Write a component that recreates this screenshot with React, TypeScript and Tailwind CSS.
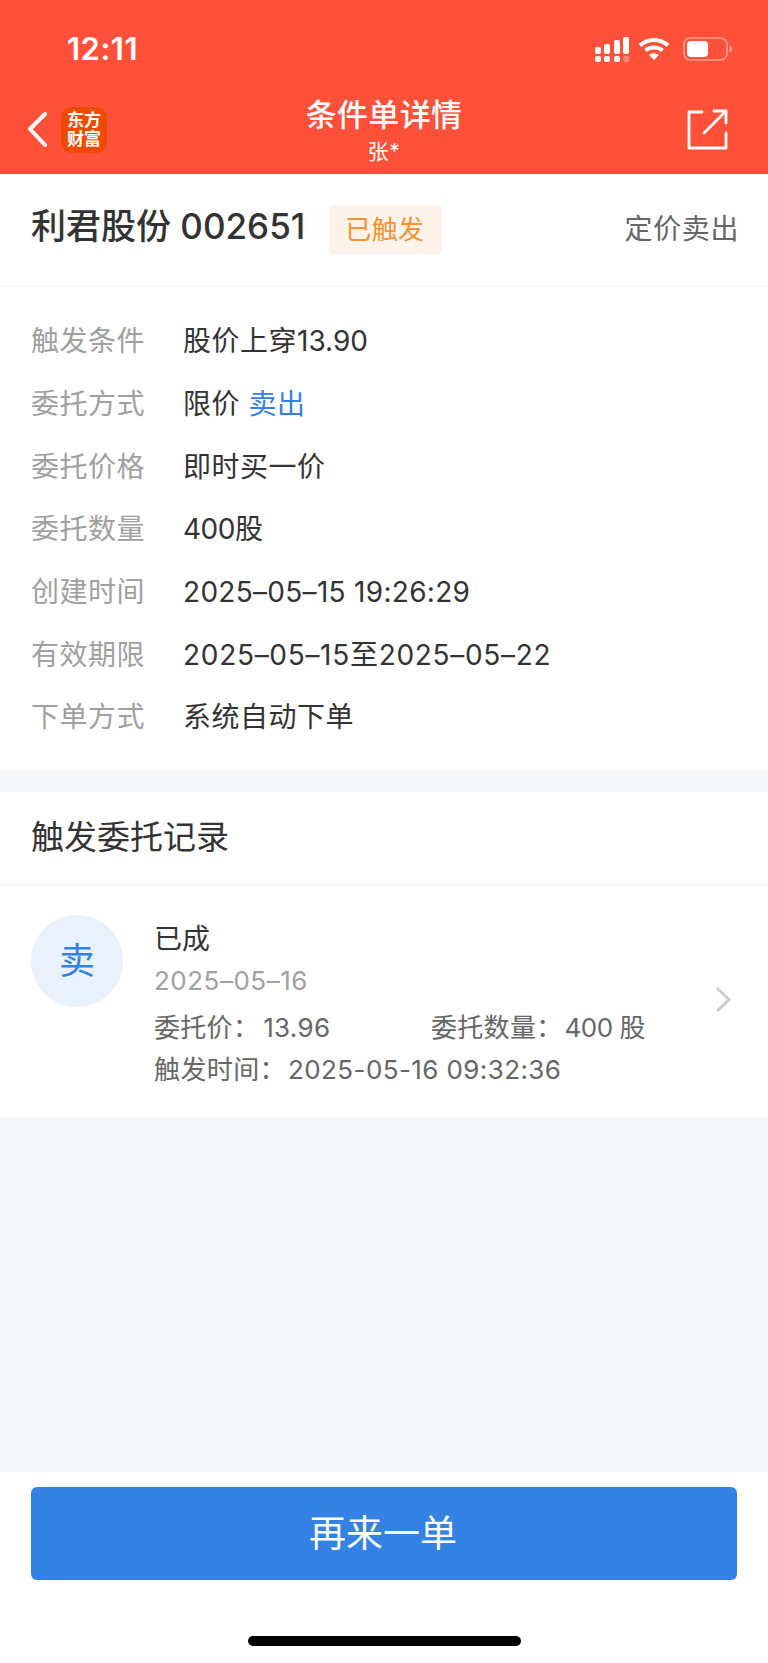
const font = "[font-family:Inter,'Noto_Sans_CJK_SC',sans-serif]";

function Row({ label, children }: { label: string; children: React.ReactNode }) {
  return (
    <div className="flex h-[62.7px] items-center tracking-[0.5px]">
      <span className="w-[152px] text-[28px] text-[#a0a0a0]">{label}</span>
      <span className="text-[28px] text-[#333333]">{children}</span>
    </div>
  );
}

function StatusIcons() {
  return (
    <div className="flex items-center">
      <svg width="36" height="26" viewBox="0 0 36 26" fill="#fff">
        <rect x="1" y="11" width="6" height="7" rx="2" />
        <rect x="10" y="8" width="6" height="10" rx="2" />
        <rect x="20" y="4" width="6" height="14" rx="2" />
        <rect x="29" y="1" width="6" height="17" rx="2" />
        <rect x="1" y="20" width="6" height="6" rx="2" />
        <rect x="10" y="20" width="6" height="6" rx="2" />
        <rect x="20" y="20" width="6" height="6" rx="2" />
        <rect x="29" y="20" width="6" height="6" rx="2" opacity="0.3" />
      </svg>
      <svg className="ml-[8px]" width="32" height="24" viewBox="0 0 32 24" fill="none" stroke="#fff" strokeWidth="4">
        <path d="M2 8.500C10 1 22 1 30 8.500" />
        <path d="M7.500 13.500C12 9.500 20 9.500 24.500 13.500" />
        <path d="M16 23l-5-5c3-2.500 7-2.500 10 0z" fill="#fff" stroke="none" />
      </svg>
      <svg className="ml-[13px]" width="50" height="24" viewBox="0 0 50 24" fill="none">
        <rect x="1" y="1" width="43" height="22" rx="6.500" stroke="#fff" strokeOpacity="0.45" strokeWidth="1.600" />
        <rect x="4" y="4" width="21" height="16" rx="4" fill="#fff" />
        <path d="M46.500 8.500c2 .8 2.500 2 2.500 3.500s-.5 2.700-2.500 3.500z" fill="#fff" fillOpacity="0.45" />
      </svg>
    </div>
  );
}

export default function App() {
  return (
    <div className={`flex h-[1663px] w-[768px] flex-col overflow-hidden bg-[#f6f7f9] ${font}`}>
      <header className="h-[174px] shrink-0 bg-[#ff513a] text-white">
        <div className="flex h-[98px] items-center justify-between pl-[67px] pr-[35px]">
          <span className="text-[31px] font-semibold tracking-[0.5px]">12:11</span>
          <StatusIcons />
        </div>
        <div className="flex h-[76px] items-start px-[27px]">
          <div className="flex w-[160px] items-center">
            <svg className="mt-[9px]" width="20" height="46" viewBox="0 0 20 46" fill="none" stroke="#fff" strokeWidth="4" strokeLinecap="round" strokeLinejoin="round">
              <path d="M18 7 3 22l15 16" />
            </svg>
            <div className="ml-[14px] mt-[9px] flex h-[46px] w-[46px] flex-col items-center justify-center rounded-[10px] bg-[#f04a00] text-[17px] font-bold leading-[19px]">
              <span>东方</span>
              <span>财富</span>
            </div>
          </div>
          <div className="-mt-[4px] flex flex-1 flex-col items-center">
            <span className="text-[31px] font-medium leading-[42px] tracking-[0.3px]">条件单详情</span>
            <span className="mt-[4px] text-[21px] leading-[24px] tracking-[0.5px]">张*</span>
          </div>
          <div className="flex w-[160px] justify-end pr-[13px] pt-[11px]">
            <svg width="41" height="41" viewBox="0 0 41 41" fill="none" stroke="#fff" strokeWidth="2.800" strokeLinecap="round" strokeLinejoin="round">
              <path d="M15 3H2v36h37V24" />
              <path d="M17 24 39 2M27 2h12v12" />
            </svg>
          </div>
        </div>
      </header>

      <section className="bg-white">
        <div className="flex h-[113px] items-center border-b border-[#f1f1f1] pl-[31px] pr-[29px] pb-[2px]">
          <span className="mb-[5px] text-[35px] font-medium text-[#333333]">利君股份 002651</span>
          <span className="ml-[24px] flex h-[49px] w-[113px] items-center justify-center rounded-[4px] bg-[#fdf3ea] pr-[2px] text-[26px] tracking-[0.3px] text-[#f5922f]">已触发</span>
          <span className="ml-auto text-[28px] tracking-[0.6px] text-[#666666]">定价卖出</span>
        </div>
        <div className="px-[31px] pb-[22px] pt-[23px]">
          <Row label="触发条件">股价上穿<span className="tracking-normal">13.90</span></Row>
          <Row label="委托方式">限价 <span className="text-[#3481e4]">卖出</span></Row>
          <Row label="委托价格">即时买一价</Row>
          <Row label="委托数量"><span className="tracking-[-0.5px]">400</span>股</Row>
          <Row label="创建时间"><span className="tracking-[0.3px]">2025–05–15 19:26:29</span></Row>
          <Row label="有效期限"><span className="tracking-[0.7px]">2025–05–15至2025–05–22</span></Row>
          <Row label="下单方式">系统自动下单</Row>
        </div>
      </section>

      <section className="mt-[21px] bg-white">
        <div className="flex h-[93px] items-center border-b border-[#f3f3f3] px-[31px] text-[33px] text-[#333333]">触发委托记录</div>
        <div className="flex h-[233px] items-start pl-[31px] pr-[36px]">
          <div className="mt-[30px] flex h-[92px] w-[92px] shrink-0 items-center justify-center rounded-full bg-[#e9f2fc] text-[36px] text-[#3481e4]">卖</div>
          <div className="ml-[31px] flex-1 pt-[34px]">
            <div className="text-[28px] leading-[40px] text-[#333333]">已成</div>
            <div className="mt-[2px] text-[26px] leading-[40px] tracking-[0.5px] text-[#a0a0a0]">2025–05–16</div>
            <div className="mt-[6px] flex text-[26px] leading-[42px] tracking-[0.3px] text-[#666666]">
              <span className="w-[277px]">委托价：<span className="ml-[4px]">13.96</span></span>
              <span>委托数量：<span className="ml-[2px] tracking-[-0.5px]">400 股</span></span>
            </div>
            <div className="text-[26px] leading-[42px] tracking-[0.4px] text-[#666666]">触发时间：<span className="ml-[2px]">2025-05-16 09:32:36</span></div>
          </div>
          <svg className="mt-[101px]" width="17" height="27" viewBox="0 0 17 27" fill="none" stroke="#cccccc" strokeWidth="3">
            <path d="m2 2 12 11.500L2 25" />
          </svg>
        </div>
      </section>

      <div className="flex-1" />

      <footer className="h-[191px] shrink-0 bg-white px-[31px] pt-[15px]">
        <button className="h-[93px] w-full rounded-[6px] bg-[#3481e4] pr-[2px] text-[37px] text-white">再来一单</button>
        <div className="mx-auto mt-[56px] h-[10px] w-[273px] rounded-full bg-black" />
      </footer>
    </div>
  );
}
